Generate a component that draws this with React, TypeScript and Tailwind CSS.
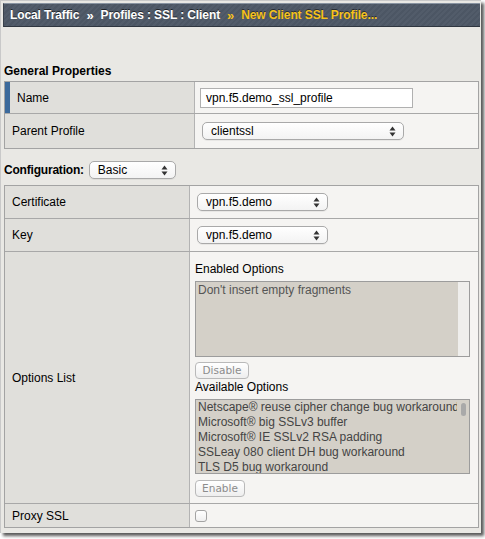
import React from "react";

const font = { fontFamily: '"Liberation Sans", Arial, sans-serif' };

// small up/down arrows that mac selects show
const SelectArrows = () => (
  <svg width="7" height="11" viewBox="0 0 7 11" className="shrink-0">
    <path d="M3.5 0.5 L6.5 4.5 L0.5 4.5 Z" fill="#333" />
    <path d="M3.5 10.5 L6.5 6.5 L0.5 6.5 Z" fill="#333" />
  </svg>
);

const MacSelect = ({ value, width }: { value: string; width: string }) => (
  <div
    className={`${width} h-[18px] flex items-center justify-between pl-[8px] pr-[7px] rounded-[5px] border border-[#a9a9a9] bg-gradient-to-b from-white to-[#f3f3f3] text-[12px] text-black shadow-[0_1px_0_rgba(0,0,0,0.05)]`}
  >
    <span className="leading-none">{value}</span>
    <SelectArrows />
  </div>
);

const GreyButton = ({ label, width }: { label: string; width: string }) => (
  <div
    className={`${width} h-[17px] flex items-center justify-center rounded-[4px] border border-[#b9b9b9] bg-gradient-to-b from-white to-[#eeeeee] text-[10.5px] text-[#8c8c8c]`}
    style={{ fontFamily: '"DejaVu Sans", "Liberation Sans", sans-serif' }}
  >
    {label}
  </div>
);

const availableOptions = [
  "Netscape® reuse cipher change bug workaround",
  "Microsoft® big SSLv3 buffer",
  "Microsoft® IE SSLv2 RSA padding",
  "SSLeay 080 client DH bug workaround",
  "TLS D5 bug workaround",
];

export default function App() {
  return (
    <div className="w-[485px] h-[539px] bg-white" style={font}>
      <div className="w-[481px] h-[533px] bg-[#e9e8e4] border-l border-t border-[#c9c9c9] pt-[2px] pl-[2px] pr-[1px] flex flex-col shadow-[3px_3px_3px_rgba(0,0,0,0.65)]">
        {/* breadcrumb header */}
        <div className="h-[24px] flex items-center pl-[6px] gap-[7px] border-t border-[#8893a1] border-b border-b-[#2f3640] border-l border-l-[#3a424d] bg-[repeating-linear-gradient(135deg,#525c6a_0px,#525c6a_2px,#4c5664_2px,#4c5664_4px)] text-[12px] font-bold tracking-[-0.1px]">
          <span className="text-white [text-shadow:0_-1px_0_rgba(0,0,0,0.6)]">Local Traffic</span>
          <span className="text-white text-[13px] leading-none">»</span>
          <span className="text-white [text-shadow:0_-1px_0_rgba(0,0,0,0.6)]">Profiles : SSL : Client</span>
          <span className="text-[#f6c21c] text-[13px] leading-none">»</span>
          <span className="text-[#f6c21c] [text-shadow:0_-1px_0_rgba(0,0,0,0.5)]">New Client SSL Profile...</span>
        </div>

        <div className="pl-[1px] pr-[1px]">
          <div className="mt-[36px] h-[16px] leading-[16px] text-[12px] font-bold text-black">General Properties</div>

          {/* general properties table */}
          <div className="mt-[2px] border border-[#a3a3a3] text-[12px] text-black">
            <div className="flex h-[31px]">
              <div className="w-[190px] flex items-center bg-[#e0dfdb] border-r border-[#b3b3b3]">
                <div className="w-[5px] h-full bg-[#3c6a9c]" />
                <span className="pl-[7px]">Name</span>
              </div>
              <div className="flex-1 flex items-center pl-[5px] bg-[#f5f4f2]">
                <div className="w-[213px] h-[20px] flex items-center pl-[5px] bg-white border border-[#b0b0b0]">
                  vpn.f5.demo_ssl_profile
                </div>
              </div>
            </div>
            <div className="flex h-[35px] border-t border-[#a8a8a8]">
              <div className="w-[190px] flex items-center pl-[7px] bg-[#e0dfdb] border-r border-[#b3b3b3]">
                Parent Profile
              </div>
              <div className="flex-1 flex items-center pl-[7px] bg-[#f5f4f2]">
                <MacSelect value="clientssl" width="w-[202px]" />
              </div>
            </div>
          </div>

          {/* configuration */}
          <div className="mt-[12px] h-[18px] flex items-center gap-[5px]">
            <span className="text-[12px] font-bold text-black tracking-[-0.2px]">Configuration:</span>
            <MacSelect value="Basic" width="w-[87px]" />
          </div>

          {/* configuration table */}
          <div className="mt-[6px] border border-[#a3a3a3] text-[12px] text-black">
            <div className="flex h-[32px]">
              <div className="w-[185px] flex items-center pl-[7px] bg-[#e0dfdb] border-r border-[#b3b3b3]">Certificate</div>
              <div className="flex-1 flex items-center pl-[7px] bg-[#f5f4f2]">
                <MacSelect value="vpn.f5.demo" width="w-[131px]" />
              </div>
            </div>
            <div className="flex h-[33px] border-t border-[#a8a8a8]">
              <div className="w-[185px] flex items-center pl-[7px] bg-[#e0dfdb] border-r border-[#b3b3b3]">Key</div>
              <div className="flex-1 flex items-center pl-[7px] bg-[#f5f4f2]">
                <MacSelect value="vpn.f5.demo" width="w-[131px]" />
              </div>
            </div>
            <div className="flex h-[252px] border-t border-[#a8a8a8]">
              <div className="w-[185px] flex items-center pl-[7px] bg-[#e0dfdb] border-r border-[#b3b3b3]">Options List</div>
              <div className="flex-1 flex flex-col pl-[5px] pt-[10px] bg-[#f5f4f2]">
                <div className="h-[15px] leading-[15px]">Enabled Options</div>
                <div className="mt-[4px] w-[275px] h-[76px] flex border border-[#9c9c9c] bg-[#d4d0c8]">
                  <div className="flex-1 pl-[2px] pt-[1px] text-[12px] leading-[15px] text-[#555] whitespace-nowrap overflow-hidden">
                    Don't insert empty fragments
                  </div>
                  <div className="w-[11px] bg-[#efeeec]" />
                </div>
                <div className="mt-[5px]">
                  <GreyButton label="Disable" width="w-[54px]" />
                </div>
                <div className="mt-[1px] h-[15px] leading-[15px]">Available Options</div>
                <div className="mt-[4px] w-[275px] h-[75px] flex border border-[#9c9c9c] bg-[#d4d0c8]">
                  <div className="flex-1 pl-[2px] text-[12px] leading-[15px] text-[#444] whitespace-nowrap overflow-hidden">
                    {availableOptions.map((o) => (
                      <div key={o}>{o}</div>
                    ))}
                  </div>
                  <div className="w-[12px] pt-[3px] flex justify-center">
                    <div className="w-[5px] h-[13px] rounded-full bg-[#a9a9a9]" />
                  </div>
                </div>
                <div className="mt-[6px]">
                  <GreyButton label="Enable" width="w-[50px]" />
                </div>
              </div>
            </div>
            <div className="flex h-[24px] border-t border-[#a8a8a8]">
              <div className="w-[185px] flex items-center pl-[7px] bg-[#e0dfdb] border-r border-[#b3b3b3]">Proxy SSL</div>
              <div className="flex-1 flex items-center pl-[5px] bg-[#f5f4f2]">
                <div className="w-[12px] h-[12px] rounded-[3px] border border-[#a3a3a3] bg-gradient-to-b from-white to-[#efefef]" />
              </div>
            </div>
          </div>
        </div>
      </div>
    </div>
  );
}
